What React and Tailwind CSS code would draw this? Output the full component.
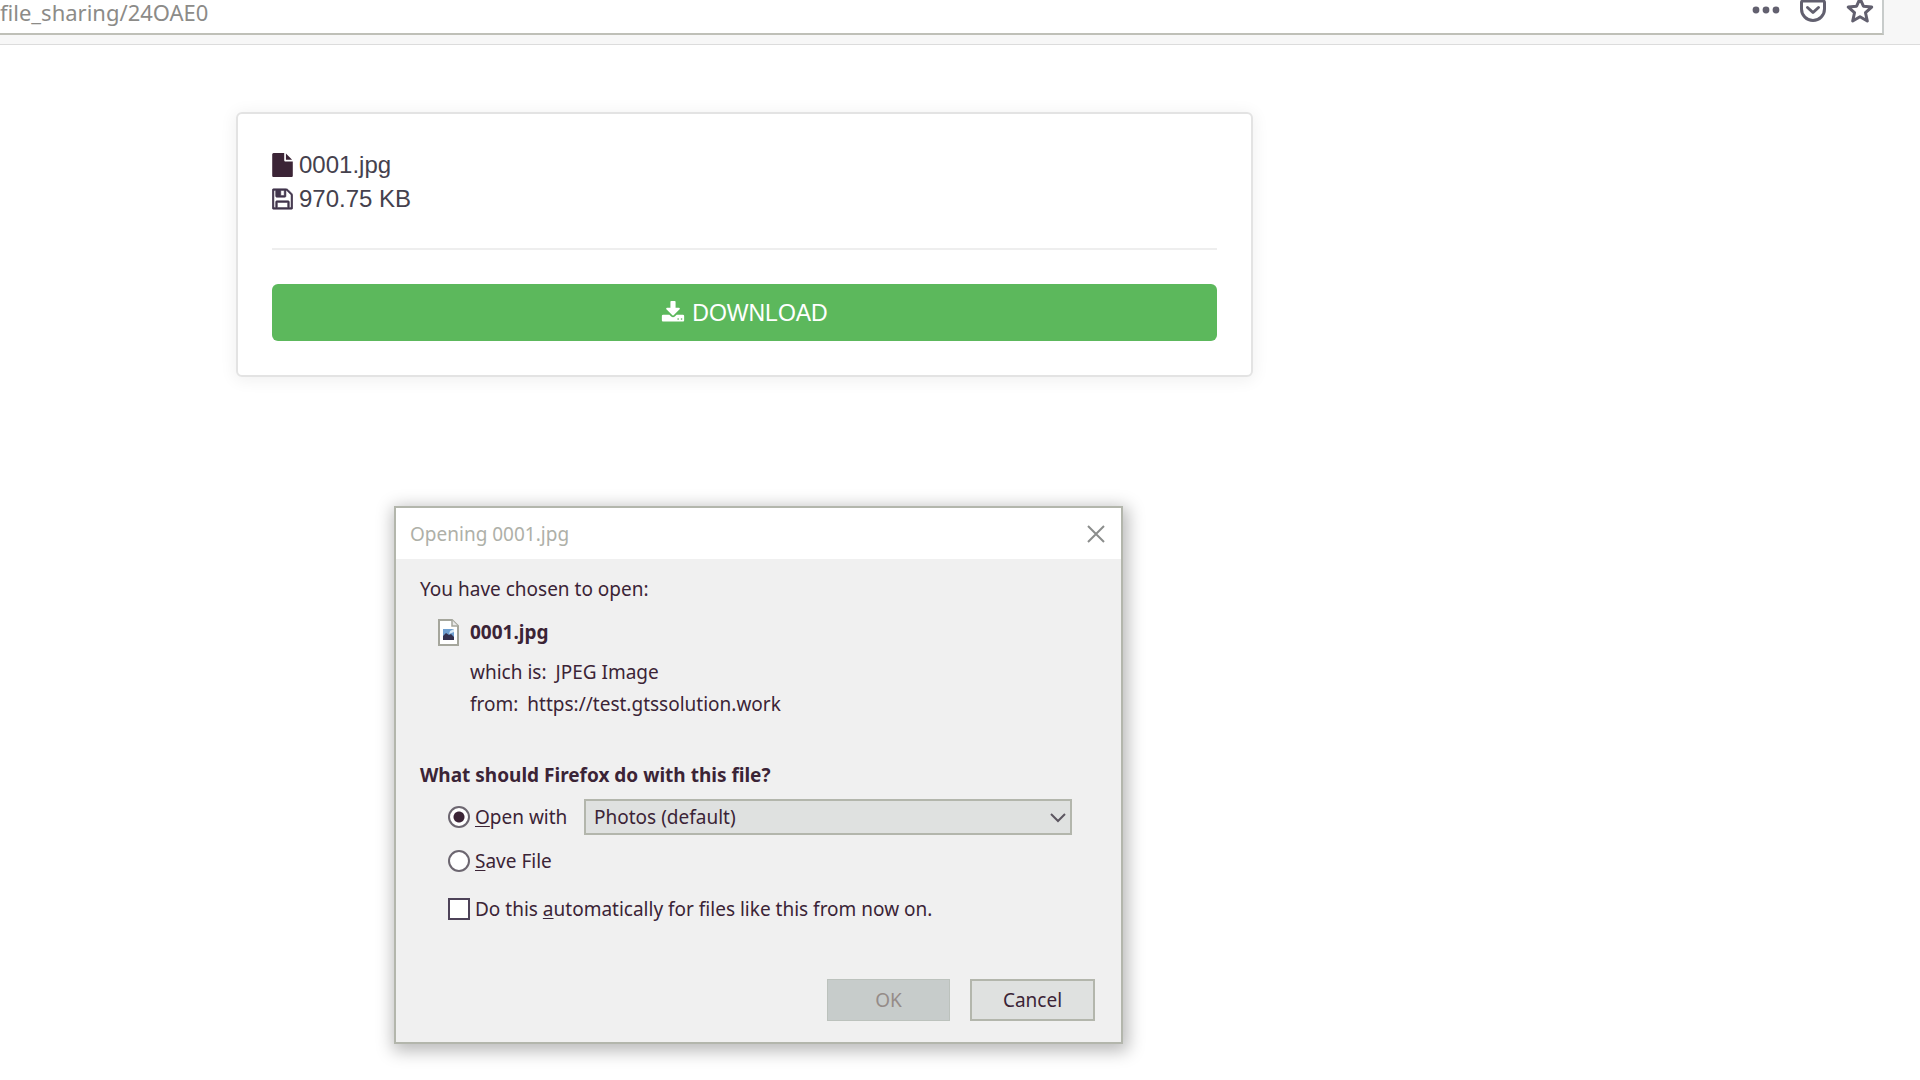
import React from "react";

const FileIcon = () => (
  <svg aria-hidden="true" viewBox="128 0 1536 1792" className="h-6 w-[21px] shrink-0 fill-[#3b2436]">
    <path d="M1152 512v-472q22 14 36 28l408 408q14 14 28 36h-472zm-128 32q0 40 28 68t68 28h544v1056q0 40-28 68t-68 28h-1344q-40 0-68-28t-28-68v-1600q0-40 28-68t68-28h800v544z" />
  </svg>
);

const FloppyIcon = () => (
  <svg aria-hidden="true" viewBox="128 0 1536 1792" className="h-6 w-[21px] shrink-0 fill-[#41354c] stroke-[#41354c] stroke-[40px]">
    <path d="M512 1536h768v-384h-768v384zm896 0h128v-896q0-14-10-38.500t-20-34.500l-281-281q-10-10-34-20t-39-10v416q0 40-28 68t-68 28h-576q-40 0-68-28t-28-68v-416h-128v1280h128v-416q0-40 28-68t68-28h832q40 0 68 28t28 68v416zm-384-928v-320q0-13-9.500-22.500t-22.500-9.500h-192q-13 0-22.500 9.500t-9.500 22.500v320q0 13 9.500 22.500t22.500 9.500h192q13 0 22.500-9.500t9.500-22.500zm640 32v928q0 40-28 68t-68 28h-1344q-40 0-68-28t-28-68v-1344q0-40 28-68t68-28h928q40 0 88 20t76 48l280 280q28 28 48 76t20 88z" />
  </svg>
);

const DownloadIcon = () => (
  <svg aria-hidden="true" viewBox="0 0 1792 1792" className="size-6 shrink-0 fill-white">
    <path d="M1344 1344q0-26-19-45t-45-19-45 19-19 45 19 45 45 19 45-19 19-45zm256 0q0-26-19-45t-45-19-45 19-19 45 19 45 45 19 45-19 19-45zm128-224v320q0 40-28 68t-68 28h-1472q-40 0-68-28t-28-68v-320q0-40 28-68t68-28h465l135 136q58 56 136 56t136-56l136-136h464q40 0 68 28t28 68zm-325-569q17 41-14 70l-448 448q-18 19-45 19t-45-19l-448-448q-31-29-14-70 17-39 59-39h256v-448q0-26 19-45t45-19h256q26 0 45 19t19 45v448h256q42 0 59 39z" />
  </svg>
);

const DotsIcon = () => (
  <svg aria-hidden="true" viewBox="0 0 28 24" className="h-6 w-7 fill-[#62606f]">
    <circle cx="4" cy="12" r="3.400" />
    <circle cx="14" cy="12" r="3.400" />
    <circle cx="24" cy="12" r="3.400" />
  </svg>
);

const PocketIcon = () => (
  <svg aria-hidden="true" viewBox="0 0 28 28" className="size-7 fill-none stroke-[#62606f] stroke-3" strokeLinecap="round" strokeLinejoin="round">
    <path d="M4 5h20a1.500 1.500 0 0 1 1.500 1.500V13a11.500 11.500 0 0 1-23 0V6.500A1.500 1.500 0 0 1 4 5z" />
    <path d="M8.500 11.500l5.500 5 5.500-5" />
  </svg>
);

const StarIcon = () => (
  <svg aria-hidden="true" viewBox="0 0 28 28" className="size-7 fill-none stroke-[#62606f] stroke-3" strokeLinejoin="round">
    <path d="M14 2.500l3.400 7.700 8.300.9-6.200 5.600 1.800 8.300-7.300-4.200-7.300 4.200 1.800-8.300-6.200-5.600 8.300-.9z" />
  </svg>
);

const ImageFileIcon = () => (
  <svg aria-hidden="true" viewBox="0 0 21 27" className="h-[27px] w-[21px] shrink-0">
    <path d="M1 1h13l6 6v19H1z" fill="#fff" stroke="#a5a69c" strokeWidth="2" />
    <path d="M14 1v6h6" fill="#e8e8e8" stroke="#a5a69c" strokeWidth="1.500" />
    <rect x="5" y="10" width="11" height="11" fill="#6f9fd0" />
    <path d="M16 10v3l-5 2 1-3z" fill="#d5e7f5" />
    <path d="M5 17l3-3 3 2 2-1 3 3v3H5z" fill="#33304e" />
  </svg>
);

function BrowserBar() {
  return (
    <header className="flex h-[45px] items-start border-b border-[#dcdcdc] bg-[#f7f7f7] pr-9">
      <div className="flex h-[35px] flex-1 items-start justify-between border-r-2 border-b-2 border-r-[#c8cccb] border-b-[#bfc0b8] bg-white pr-2">
        <input
          aria-label="Address"
          readOnly
          defaultValue="file_sharing/24OAE0"
          className="-mt-1 h-8 w-1/2 bg-transparent font-['Noto_Sans',sans-serif] text-[22px] leading-8 text-[#8c8b88] outline-none"
        />
        <div className="-mt-1 flex items-center gap-[19px]">
          <button type="button" aria-label="Page actions"><DotsIcon /></button>
          <button type="button" aria-label="Save to Pocket"><PocketIcon /></button>
          <button type="button" aria-label="Bookmark this page"><StarIcon /></button>
        </div>
      </div>
    </header>
  );
}

function FileCard() {
  return (
    <section className="ml-[236px] mt-[67px] max-w-[1017px] rounded-md border-2 border-[#e3e3e3] bg-white p-[34px] font-['Liberation_Sans',Arial,sans-serif] text-[24px] leading-[34px] text-[#45414d] shadow-[0_2px_16px_2px_rgba(0,0,0,0.06)]">
      <p className="flex items-center gap-1.5"><FileIcon />0001.jpg</p>
      <p className="flex items-center gap-1.5"><FloppyIcon />970.75 KB</p>
      <hr className="mb-[34px] mt-8 border-t-2 border-[#eeeeee]" />
      <button type="button" className="flex h-[57px] w-full items-center justify-center gap-[7px] rounded-md bg-[#5cb85c] text-[23px] text-white">
        <DownloadIcon />DOWNLOAD
      </button>
    </section>
  );
}

function OpenDialog() {
  return (
    <div
      role="dialog"
      aria-labelledby="dialog-title"
      className="mb-9 ml-[394px] mt-[129px] max-w-[729px] border-2 border-[#b3b6ac] bg-[#f0f0f0] font-['Noto_Sans',sans-serif] text-[19px] leading-7 text-[#3b2436] shadow-[2px_4px_16px_3px_rgba(0,0,0,0.28)]"
    >
      <div className="flex h-[51px] items-center justify-between bg-white pl-3.5 pr-4">
        <h1 id="dialog-title" className="text-[#aeb0a8]">Opening 0001.jpg</h1>
        <button type="button" aria-label="Close">
          <svg aria-hidden="true" viewBox="0 0 18 18" className="size-[18px] stroke-[#8b8d8c] stroke-2">
            <path d="M1 1l16 16M17 1L1 17" />
          </svg>
        </button>
      </div>
      <form className="pb-[21px] pl-6 pr-[26px] pt-4">
        <p>You have chosen to open:</p>
        <div className="mt-[15px] flex items-center gap-[11px] pl-[18px]">
          <ImageFileIcon />
          <strong className="font-bold">0001.jpg</strong>
        </div>
        <dl className="mt-3 flex flex-col gap-1 pl-[50px]">
          <div className="flex gap-[9px]"><dt>which is:</dt><dd>JPEG Image</dd></div>
          <div className="flex gap-[9px]"><dt>from:</dt><dd>https://test.gtssolution.work</dd></div>
        </dl>
        <fieldset className="mt-[43px]">
          <legend className="font-bold">What should Firefox do with this file?</legend>
          <div className="mt-2.5 flex items-center pl-7 pr-[23px]">
            <label className="flex w-[136px] shrink-0 items-center gap-[5px]">
              <input type="radio" name="action" defaultChecked className="size-[22px] shrink-0 appearance-none rounded-full border-2 border-[#6c6670] bg-white checked:bg-[radial-gradient(circle,#3b2436_5px,#fff_6px)]" />
              <span><u className="underline-offset-2">O</u>pen with</span>
            </label>
            <div className="relative flex-1">
              <select aria-label="Application" className="h-9 w-full appearance-none border-2 border-[#b3b6ac] bg-[#dfe1e0] px-2">
                <option>Photos (default)</option>
              </select>
              <svg aria-hidden="true" viewBox="0 0 16 10" className="pointer-events-none absolute right-1.5 top-3.5 h-2.5 w-4 fill-none stroke-[#5c5660] stroke-2">
                <path d="M1 1l7 7 7-7" />
              </svg>
            </div>
          </div>
          <label className="mt-3 flex items-center gap-[5px] pl-7">
            <input type="radio" name="action" className="size-[22px] shrink-0 appearance-none rounded-full border-2 border-[#6c6670] bg-white checked:bg-[radial-gradient(circle,#3b2436_5px,#fff_6px)]" />
            <span><u className="underline-offset-2">S</u>ave File</span>
          </label>
        </fieldset>
        <label className="mt-5 flex items-center gap-[5px] pl-7">
          <input type="checkbox" className="size-[22px] shrink-0 appearance-none border-2 border-[#4d4258] bg-white checked:bg-[#3b2436]" />
          <span>Do this <u className="underline-offset-2">a</u>utomatically for files like this from now on.</span>
        </label>
        <div className="mt-14 flex justify-end gap-5">
          <button type="button" disabled className="h-[42px] w-[123px] border border-[#bcc2bd] bg-[#c7cccb] text-[#958b88]">OK</button>
          <button type="button" className="h-[42px] w-[125px] border-2 border-[#b3b6ac] bg-[#dfe1e0]">Cancel</button>
        </div>
      </form>
    </div>
  );
}

export default function App() {
  return (
    <div className="flow-root min-h-screen bg-white">
      <BrowserBar />
      <main>
        <FileCard />
        <OpenDialog />
      </main>
    </div>
  );
}
